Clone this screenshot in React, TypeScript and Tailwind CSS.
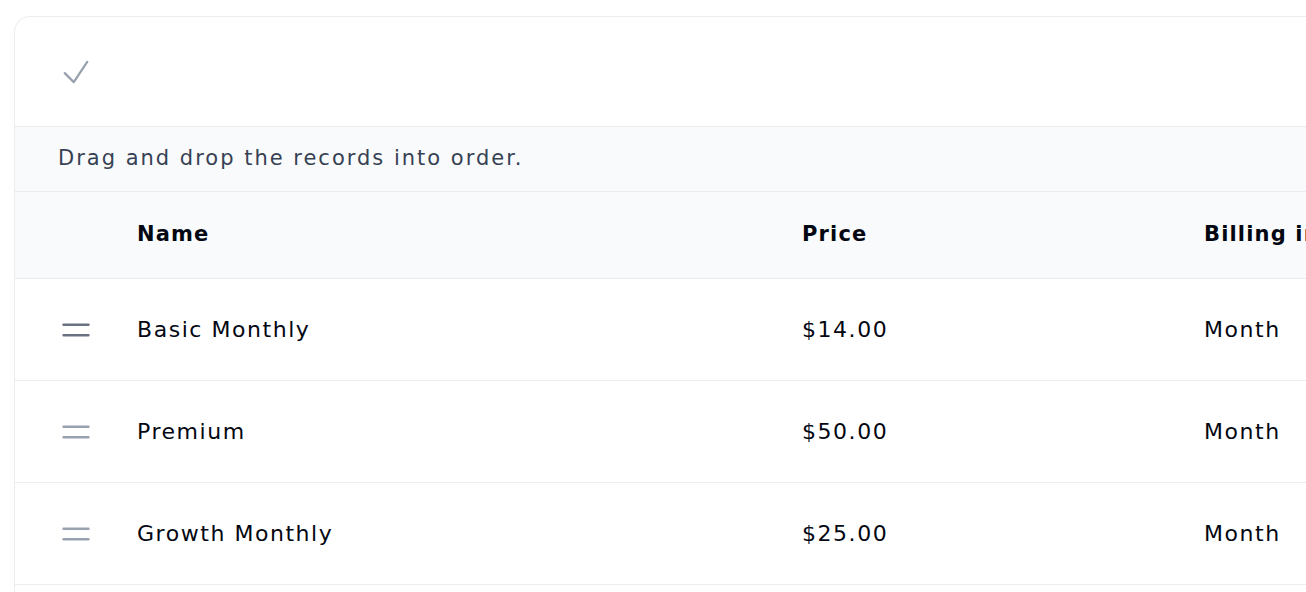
import React from 'react';

type Plan = { name: string; price: string; interval: string };

const plans: Plan[] = [
  { name: 'Basic Monthly', price: '$14.00', interval: 'Month' },
  { name: 'Premium', price: '$50.00', interval: 'Month' },
  { name: 'Growth Monthly', price: '$25.00', interval: 'Month' },
];

const CheckIcon = ({ className }: { className?: string }) => (
  <svg xmlns="http://www.w3.org/2000/svg" fill="none" viewBox="0 0 24 24" strokeWidth={1.5} stroke="currentColor" className={className}>
    <path strokeLinecap="round" strokeLinejoin="round" d="m4.5 12.75 6 6 9-13.5" />
  </svg>
);

const HandleIcon = ({ className }: { className?: string }) => (
  <svg xmlns="http://www.w3.org/2000/svg" fill="none" viewBox="0 0 28 14" strokeWidth={2.4} stroke="currentColor" className={className}>
    <path strokeLinecap="round" d="M1.5 1.8h25M1.5 12.2h25" />
  </svg>
);

export default function App() {
  return (
    <div className="h-[592px] w-full overflow-hidden bg-white pl-[14px] pt-[16px]" style={{ fontFamily: '"DejaVu Sans", "Noto Sans", sans-serif' }}>
      <div className="w-[1400px] rounded-2xl border border-gray-200/80 bg-white">
        {/* toolbar */}
        <div className="flex h-[109px] items-center pl-[43px]">
          <button className="text-gray-400">
            <CheckIcon className="h-[36px] w-[36px]" />
          </button>
        </div>

        {/* hint */}
        <div className="flex h-[66px] items-center border-y border-gray-200/80 bg-gray-50 pl-[43px] text-[21px] tracking-[0.095em] text-gray-700">
          Drag and drop the records into order.
        </div>

        {/* table header */}
        <div className="flex h-[87px] items-center border-b border-gray-200/80 bg-gray-50 text-[21px] font-bold tracking-[0.055em] text-gray-950">
          <div className="w-[122px] shrink-0" />
          <div className="w-[665px] shrink-0">Name</div>
          <div className="w-[402px] shrink-0">Price</div>
          <div className="flex-1 whitespace-nowrap">Billing interval</div>
        </div>

        {/* rows */}
        {plans.map((plan, i) => (
          <div key={plan.name} className="flex h-[102px] items-center border-b border-gray-200/80 text-[22px] tracking-[0.07em] text-gray-950">
            <div className="w-[122px] shrink-0 pl-[47px]">
              <HandleIcon className={`h-[14px] w-[28px] ${i === 0 ? 'text-gray-500' : 'text-gray-400'}`} />
            </div>
            <div className="w-[665px] shrink-0">{plan.name}</div>
            <div className="w-[402px] shrink-0">{plan.price}</div>
            <div className="flex-1">{plan.interval}</div>
          </div>
        ))}

        {/* pagination area below the fold */}
        <div className="h-[64px]" />
      </div>
    </div>
  );
}
